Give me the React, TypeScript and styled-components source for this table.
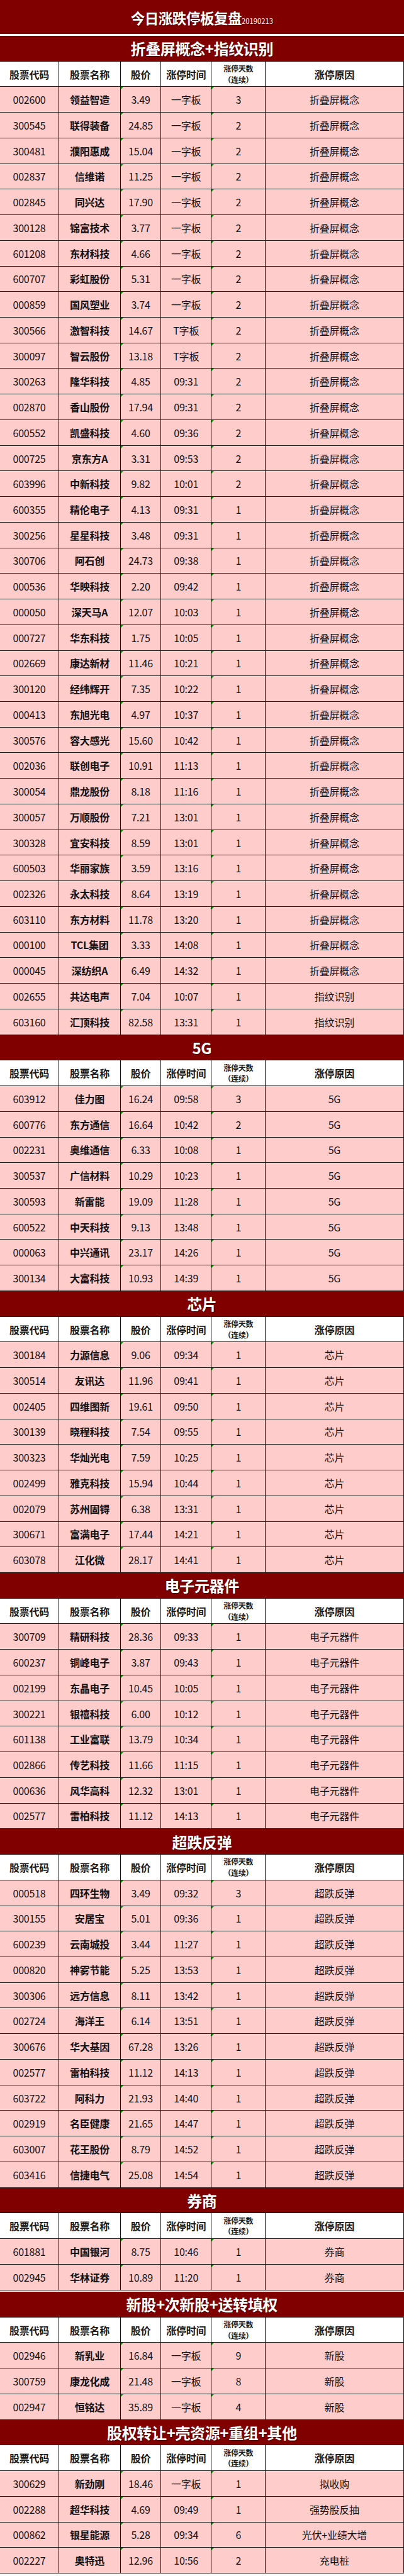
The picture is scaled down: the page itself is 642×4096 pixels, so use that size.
import React from "react";
import styled, { createGlobalStyle, css } from "styled-components";

// 参考图宽 800，这里整体缩放到 642
const S = 0.802;
const px = (n: number) => `${(n * S).toFixed(2)}px`;

const UNIT = 50.8; // 每一行（含分区标题、表头）的高度
const COLS = `${px(117.3)} ${px(122)} ${px(80.1)} ${px(100)} ${px(107.1)} 1fr`;

const GlobalStyle = createGlobalStyle`
  html, body {
    margin: 0;
    padding: 0;
    background: #fff;
  }
  body {
    font-family: "Noto Sans CJK SC", "Noto Sans", sans-serif;
  }
`;

const Page = styled.div`
  width: ${px(800)};
  display: flex;
  flex-direction: column;
`;

const TitleBar = styled.header`
  height: ${px(67)};
  background: #800000;
  color: #fff;
  display: flex;
  align-items: center;
  justify-content: center;
  padding-top: ${px(4)};
  box-sizing: border-box;
`;

const TitleText = styled.h1`
  margin: 0;
  font-size: ${px(28)};
  font-weight: 700;
  line-height: 1;
  letter-spacing: ${px(-0.5)};
  text-shadow: 1px 1px 1px rgba(0, 0, 0, 0.45);
`;

const TitleDate = styled.span`
  font-size: ${px(14)};
  font-weight: 400;
  letter-spacing: 0;
`;

const WhiteGap = styled.div<{ $h: number }>`
  height: ${(p) => px(p.$h)};
  background: #fff;
`;

const SectionBar = styled.div`
  height: ${px(UNIT)};
  background: #800000;
  color: #fff;
  display: flex;
  align-items: center;
  justify-content: center;
  border-bottom: 1px solid #2a0000;
  box-sizing: border-box;
  font-size: ${px(30)};
  font-weight: 700;
  letter-spacing: ${px(-0.5)};
  text-shadow: 1px 1px 1px rgba(0, 0, 0, 0.5);
`;

const Grid = styled.div<{ $head?: boolean }>`
  display: grid;
  grid-template-columns: ${COLS};
  height: ${px(UNIT)};
  background: ${(p) => (p.$head ? "#ffffff" : "#ffcccc")};
  border-bottom: ${px(2)} solid #1e1e1e;
  box-sizing: border-box;
`;

const flag = css`
  &::before {
    content: "";
    position: absolute;
    top: 0;
    left: 0;
    border-top: ${px(6)} solid #138a13;
    border-right: ${px(6)} solid transparent;
  }
`;

const Cell = styled.div<{ $bold?: boolean; $flag?: boolean }>`
  position: relative;
  display: flex;
  align-items: center;
  justify-content: center;
  border-right: 1px solid #111;
  color: #111;
  font-size: ${px(20)};
  font-weight: ${(p) => (p.$bold ? 700 : 400)};
  white-space: nowrap;
  letter-spacing: ${px(-0.3)};
  ${(p) => p.$flag && flag}
`;

const HeadCell = styled(Cell)`
  font-weight: 700;
  color: #1a1a1a;
`;

const StackCell = styled(HeadCell)`
  flex-direction: column;
  font-size: ${px(15)};
  line-height: 1.45;
`;

type Section = { title: string; gap?: number; rows: string[] };

const sections: Section[] = [
  {
    title: "折叠屏概念+指纹识别",
    gap: 4,
    rows: [
      "002600 领益智造 3.49 一字板 3 折叠屏概念",
      "300545 联得装备 24.85 一字板 2 折叠屏概念",
      "300481 濮阳惠成 15.04 一字板 2 折叠屏概念",
      "002837 信维诺 11.25 一字板 2 折叠屏概念",
      "002845 同兴达 17.90 一字板 2 折叠屏概念",
      "300128 锦富技术 3.77 一字板 2 折叠屏概念",
      "601208 东材科技 4.66 一字板 2 折叠屏概念",
      "600707 彩虹股份 5.31 一字板 2 折叠屏概念",
      "000859 国风塑业 3.74 一字板 2 折叠屏概念",
      "300566 激智科技 14.67 T字板 2 折叠屏概念",
      "300097 智云股份 13.18 T字板 2 折叠屏概念",
      "300263 隆华科技 4.85 09:31 2 折叠屏概念",
      "002870 香山股份 17.94 09:31 2 折叠屏概念",
      "600552 凯盛科技 4.60 09:36 2 折叠屏概念",
      "000725 京东方A 3.31 09:53 2 折叠屏概念",
      "603996 中新科技 9.82 10:01 2 折叠屏概念",
      "600355 精伦电子 4.13 09:31 1 折叠屏概念",
      "300256 星星科技 3.48 09:31 1 折叠屏概念",
      "300706 阿石创 24.73 09:38 1 折叠屏概念",
      "000536 华映科技 2.20 09:42 1 折叠屏概念",
      "000050 深天马A 12.07 10:03 1 折叠屏概念",
      "000727 华东科技 1.75 10:05 1 折叠屏概念",
      "002669 康达新材 11.46 10:21 1 折叠屏概念",
      "300120 经纬辉开 7.35 10:22 1 折叠屏概念",
      "000413 东旭光电 4.97 10:37 1 折叠屏概念",
      "300576 容大感光 15.60 10:42 1 折叠屏概念",
      "002036 联创电子 10.91 11:13 1 折叠屏概念",
      "300054 鼎龙股份 8.18 11:16 1 折叠屏概念",
      "300057 万顺股份 7.21 13:01 1 折叠屏概念",
      "300328 宜安科技 8.59 13:01 1 折叠屏概念",
      "600503 华丽家族 3.59 13:16 1 折叠屏概念",
      "002326 永太科技 8.64 13:19 1 折叠屏概念",
      "603110 东方材料 11.78 13:20 1 折叠屏概念",
      "000100 TCL集团 3.33 14:08 1 折叠屏概念",
      "000045 深纺织A 6.49 14:32 1 折叠屏概念",
      "002655 共达电声 7.04 10:07 1 指纹识别",
      "603160 汇顶科技 82.58 13:31 1 指纹识别",
    ],
  },
  {
    title: "5G",
    rows: [
      "603912 佳力图 16.24 09:58 3 5G",
      "600776 东方通信 16.64 10:42 2 5G",
      "002231 奥维通信 6.33 10:08 1 5G",
      "300537 广信材料 10.29 10:23 1 5G",
      "300593 新雷能 19.09 11:28 1 5G",
      "600522 中天科技 9.13 13:48 1 5G",
      "000063 中兴通讯 23.17 14:26 1 5G",
      "300134 大富科技 10.93 14:39 1 5G",
    ],
  },
  {
    title: "芯片",
    rows: [
      "300184 力源信息 9.06 09:34 1 芯片",
      "300514 友讯达 11.96 09:41 1 芯片",
      "002405 四维图新 19.61 09:50 1 芯片",
      "300139 晓程科技 7.54 09:55 1 芯片",
      "300323 华灿光电 7.59 10:25 1 芯片",
      "002499 雅克科技 15.94 10:44 1 芯片",
      "002079 苏州固锝 6.38 13:31 1 芯片",
      "300671 富满电子 17.44 14:21 1 芯片",
      "603078 江化微 28.17 14:41 1 芯片",
    ],
  },
  {
    title: "电子元器件",
    rows: [
      "300709 精研科技 28.36 09:33 1 电子元器件",
      "600237 铜峰电子 3.87 09:43 1 电子元器件",
      "002199 东晶电子 10.45 10:05 1 电子元器件",
      "300221 银禧科技 6.00 10:12 1 电子元器件",
      "601138 工业富联 13.79 10:34 1 电子元器件",
      "002866 传艺科技 11.66 11:15 1 电子元器件",
      "000636 风华高科 12.32 13:01 1 电子元器件",
      "002577 雷柏科技 11.12 14:13 1 电子元器件",
    ],
  },
  {
    title: "超跌反弹",
    rows: [
      "000518 四环生物 3.49 09:32 3 超跌反弹",
      "300155 安居宝 5.01 09:36 1 超跌反弹",
      "600239 云南城投 3.44 11:27 1 超跌反弹",
      "000820 神雾节能 5.25 13:53 1 超跌反弹",
      "300306 远方信息 8.11 13:42 1 超跌反弹",
      "002724 海洋王 6.14 13:51 1 超跌反弹",
      "300676 华大基因 67.28 13:26 1 超跌反弹",
      "002577 雷柏科技 11.12 14:13 1 超跌反弹",
      "603722 阿科力 21.93 14:40 1 超跌反弹",
      "002919 名臣健康 21.65 14:47 1 超跌反弹",
      "603007 花王股份 8.79 14:52 1 超跌反弹",
      "603416 信捷电气 25.08 14:54 1 超跌反弹",
    ],
  },
  {
    title: "券商",
    rows: [
      "601881 中国银河 8.75 10:46 1 券商",
      "002945 华林证券 10.89 11:20 1 券商",
    ],
  },
  {
    title: "新股+次新股+送转填权",
    gap: 3,
    rows: [
      "002946 新乳业 16.84 一字板 9 新股",
      "300759 康龙化成 21.48 一字板 8 新股",
      "002947 恒铭达 35.89 一字板 4 新股",
    ],
  },
  {
    title: "股权转让+壳资源+重组+其他",
    rows: [
      "300629 新劲刚 18.46 一字板 1 拟收购",
      "002288 超华科技 4.69 09:49 1 强势股反抽",
      "000862 银星能源 5.28 09:34 6 光伏+业绩大增",
      "002227 奥特迅 12.96 10:56 2 充电桩",
    ],
  },
];

function HeaderRow() {
  return (
    <Grid $head>
      <HeadCell>股票代码</HeadCell>
      <HeadCell>股票名称</HeadCell>
      <HeadCell>股价</HeadCell>
      <HeadCell>涨停时间</HeadCell>
      <StackCell>
        <span>涨停天数</span>
        <span>（连续）</span>
      </StackCell>
      <HeadCell>涨停原因</HeadCell>
    </Grid>
  );
}

function StockRow({ line }: { line: string }) {
  const [code, name, price, time, days, reason] = line.split(" ");
  return (
    <Grid>
      <Cell>{code}</Cell>
      <Cell $bold>{name}</Cell>
      <Cell $flag>{price}</Cell>
      <Cell>{time}</Cell>
      <Cell $flag>{days}</Cell>
      <Cell>{reason}</Cell>
    </Grid>
  );
}

export default function App() {
  return (
    <Page>
      <GlobalStyle />
      <TitleBar>
        <TitleText>
          今日涨跌停板复盘<TitleDate>20190213</TitleDate>
        </TitleText>
      </TitleBar>
      {sections.map((sec) => (
        <React.Fragment key={sec.title}>
          {sec.gap ? <WhiteGap $h={sec.gap} /> : null}
          <SectionBar>{sec.title}</SectionBar>
          <HeaderRow />
          {sec.rows.map((r) => (
            <StockRow key={sec.title + r} line={r} />
          ))}
        </React.Fragment>
      ))}
    </Page>
  );
}
